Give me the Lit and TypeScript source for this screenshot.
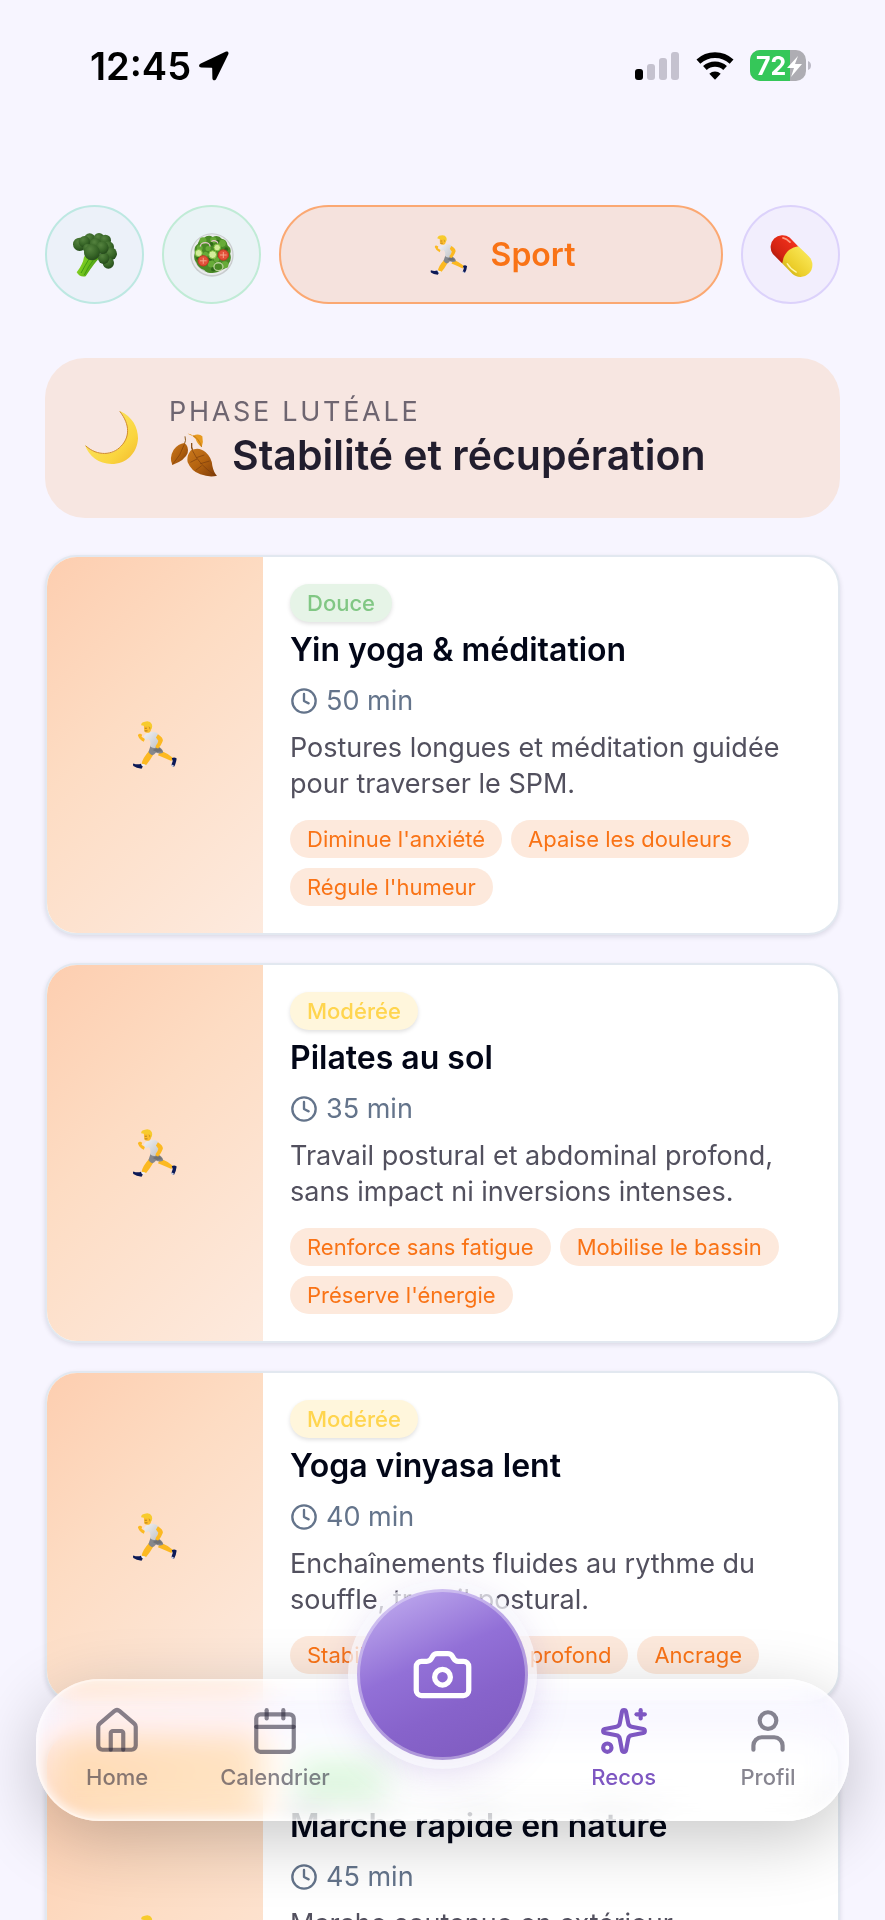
import { LitElement, html, css, svg } from "lit";
import { customElement, property, state } from "lit/decorators.js";
import { classMap } from "lit/directives/class-map.js";

type Level = "Douce" | "Modérée";

interface Workout {
  level: Level;
  title: string;
  minutes: number;
  text: string;
  tags: string[];
}

const workouts: Workout[] = [
  {
    level: "Douce",
    title: "Yin yoga & méditation",
    minutes: 50,
    text: "Postures longues et méditation guidée pour traverser le SPM.",
    tags: ["Diminue l'anxiété", "Apaise les douleurs", "Régule l'humeur"],
  },
  {
    level: "Modérée",
    title: "Pilates au sol",
    minutes: 35,
    text: "Travail postural et abdominal profond, sans impact ni inversions intenses.",
    tags: ["Renforce sans fatigue", "Mobilise le bassin", "Préserve l'énergie"],
  },
  {
    level: "Modérée",
    title: "Yoga vinyasa lent",
    minutes: 40,
    text: "Enchaînements fluides au rythme du souffle, travail postural.",
    tags: ["Stabilise", "Gainage profond", "Ancrage"],
  },
  {
    level: "Douce",
    title: "Marche rapide en nature",
    minutes: 45,
    text: "Marche soutenue en extérieur accompagnée de respirations profondes.",
    tags: ["Améliore l'endurance", "Apaise le mental", "Oxygène"],
  },
];

/* ---------- Illustrations ---------- */

const runner = html`<svg class="emoji" viewBox="0 0 134 146" aria-hidden="true">
  <defs>
    <linearGradient id="shirt" x1="0" y1="0" x2="1" y2="1">
      <stop offset="0" stop-color="#f1f1f3" /><stop offset="1" stop-color="#c3c5c9" />
    </linearGradient>
  </defs>
  <path d="M84 90 Q104 98 121 112 L117 122 Q96 112 76 104Z" fill="#fcb921" />
  <path d="M118 113 Q126 108 133 114 Q131 130 125 139 Q119 140 117 134 L121 122Z" fill="#0c1a57" />
  <path d="M117 132 L125 136 L122 140 Q117 140 117 134Z" fill="#cfd6ea" />
  <path d="M48 92 L62 102 Q52 120 40 134 L26 130 Q30 112 48 92Z" fill="#fcb921" />
  <path d="M1 129 Q14 134 24 130 L30 134 Q30 142 26 145 Q10 144 1 137 Q-1 132 1 129Z" fill="#0c1a57" />
  <path d="M24 129 L38 133 L34 138 L27 137Z" fill="#eef0f5" />
  <path d="M54 74 L78 78 Q92 86 92 96 Q82 102 70 96 Q64 104 58 104 Q50 100 47 94Z" fill="#85878c" />
  <path d="M60 88 L78 80 L90 92 L72 94Z" fill="#6f7176" />
  <path d="M33 46 Q44 32 60 33 Q74 34 77 42 Q80 64 68 82 Q58 84 52 76 Q56 62 47 55 L38 59Z" fill="url(#shirt)" />
  <path d="M76 40 Q92 50 91 60 Q86 74 77 84 Q68 82 69 76 Q76 68 77 60 L70 50Z" fill="#fcb921" />
  <path d="M15 44 Q16 37 23 39 L28 42 L26 48 L36 55 L33 63 Q20 58 15 44Z" fill="#fcb921" />
  <path d="M33 12 Q44 6 55 14 Q58 28 50 35 Q40 38 34 31Z" fill="#fdbd2c" />
  <path d="M37 22 h4 M37 30 h6" stroke="#8a5a12" stroke-width="2" stroke-linecap="round" />
  <path d="M25 13 Q24 4 36 2 Q52 -2 57 9 Q61 20 54 26 Q48 24 47 17 Q36 16 25 13Z" fill="#f7cb2d" />
  <path d="M48 18 q5 0 3 7" stroke="#b47a16" stroke-width="2" fill="none" />
</svg>`;

const broccoli = html`<svg class="emoji" viewBox="0 0 132 132" aria-hidden="true">
  <defs>
    <radialGradient id="floret" cx=".38" cy=".3" r=".75">
      <stop offset="0" stop-color="#55833f" /><stop offset=".6" stop-color="#376527" /><stop offset="1" stop-color="#23481a" />
    </radialGradient>
    <linearGradient id="stalk" x1="0" y1="0" x2="1" y2=".4">
      <stop offset="0" stop-color="#9be02c" /><stop offset=".5" stop-color="#6fc11c" /><stop offset="1" stop-color="#3f8e12" />
    </linearGradient>
  </defs>
  <path d="M42 60 L88 66 Q66 86 38 130 Q20 134 11 118 Q30 94 33 72Z" fill="url(#stalk)" />
  <path d="M48 78 Q36 98 24 120 M62 80 Q46 100 34 126" stroke="#3f9a12" stroke-width="3" fill="none" />
  <g fill="url(#floret)">
    <circle cx="50" cy="18" r="17" /><circle cx="78" cy="17" r="17" /><circle cx="97" cy="22" r="17" />
    <circle cx="106" cy="42" r="17" /><circle cx="20" cy="34" r="20" /><circle cx="34" cy="26" r="17" />
    <circle cx="113" cy="62" r="19" /><circle cx="106" cy="90" r="17" /><circle cx="92" cy="76" r="17" />
    <circle cx="68" cy="34" r="18" /><circle cx="88" cy="44" r="19" /><circle cx="44" cy="46" r="14" />
    <circle cx="57" cy="58" r="24" />
  </g>
</svg>`;

const salad = html`<svg class="emoji" viewBox="0 0 136 136" aria-hidden="true">
  <circle cx="68" cy="68" r="67" fill="#c9ccce" />
  <circle cx="68" cy="67" r="63" fill="#e9ebec" />
  <circle cx="68" cy="68" r="56" fill="#c4c8c6" />
  <path d="M42 16 Q56 4 70 12 Q88 4 98 18 Q114 20 116 38 Q130 48 124 64 Q130 82 120 94 Q112 112 96 114 Q84 124 70 124 Q52 124 44 114 Q24 108 20 92 Q8 78 16 62 Q10 44 24 34 Q28 18 42 16Z" fill="#4a8a26" />
  <g fill="#67ab38">
    <circle cx="40" cy="24" r="11" /><circle cx="72" cy="22" r="10" /><circle cx="100" cy="32" r="11" />
    <circle cx="30" cy="46" r="9" /><circle cx="56" cy="48" r="8" /><circle cx="66" cy="96" r="11" />
    <circle cx="108" cy="98" r="11" /><circle cx="48" cy="66" r="8" /><circle cx="82" cy="82" r="8" />
  </g>
  <g fill="#2f6a18">
    <circle cx="66" cy="34" r="6" /><circle cx="112" cy="50" r="6" /><circle cx="72" cy="112" r="7" />
    <circle cx="86" cy="26" r="5" /><circle cx="24" cy="78" r="5" /><circle cx="62" cy="80" r="6" />
  </g>
  <g fill="none" stroke="#e9c3cf" stroke-width="4">
    <path d="M32 42 A15 12 0 0 1 62 42" /><path d="M66 26 A12 9 0 0 1 86 32" />
  </g>
  <ellipse cx="88" cy="104" rx="14" ry="12" fill="none" stroke="#b9cf9a" stroke-width="4" />
  <g fill="#d3ec9a" stroke="#7fbf3c" stroke-width="3">
    <circle cx="27" cy="62" r="11" /><circle cx="84" cy="45" r="10" /><circle cx="70" cy="67" r="12" />
  </g>
  <g fill="#e2513a" stroke="#c23622" stroke-width="3">
    <circle cx="41" cy="86" r="16" /><circle cx="103" cy="68" r="16" />
  </g>
  <path d="M32 86 h18 M41 78 v16 M94 68 h18 M103 60 v16" stroke="#f5a58c" stroke-width="3" stroke-linecap="round" />
</svg>`;

const pill = html`<svg class="emoji" viewBox="0 0 126 126" aria-hidden="true">
  <defs>
    <linearGradient id="red" x1="0" y1="1" x2="1" y2="0">
      <stop offset="0" stop-color="#8e1207" /><stop offset=".35" stop-color="#d32412" /><stop offset=".8" stop-color="#f0301b" /><stop offset="1" stop-color="#c52514" />
    </linearGradient>
    <linearGradient id="yellow" x1="0" y1="1" x2="1" y2="0">
      <stop offset="0" stop-color="#b59a0a" /><stop offset=".35" stop-color="#ecce2a" /><stop offset=".75" stop-color="#f7e34f" /><stop offset="1" stop-color="#c9ae18" />
    </linearGradient>
  </defs>
  <path d="M84 39 L59 13 A34 34 0 0 0 11 60 L38 87 Z" fill="url(#red)" />
  <path d="M84 38 L114 67 A34 34 0 0 1 66 116 L38 87 Q42 46 84 38Z" fill="url(#yellow)" />
  <path d="M40 14 Q50 16 60 26" stroke="#ff9d84" stroke-width="5" fill="none" stroke-linecap="round" />
  <path d="M52 88 Q62 104 78 112" stroke="#fff6a8" stroke-width="4" fill="none" stroke-linecap="round" />
</svg>`;

const moon = html`<svg class="emoji" viewBox="0 0 160 160" aria-hidden="true">
  <defs>
    <linearGradient id="moon" x1="0" y1="0" x2="1" y2="1">
      <stop offset=".3" stop-color="#fbe25a" /><stop offset=".7" stop-color="#fad53f" /><stop offset="1" stop-color="#f2b82c" />
    </linearGradient>
  </defs>
  <path d="M105 0 C143 16 160 50 160 82 C158 128 124 160 80 160 C42 160 12 138 0 103 C38 140 84 134 108 108 C136 80 136 40 105 0Z" fill="url(#moon)" />
  <path d="M105 1 C137 42 135 80 108 107 C84 133 38 138 2 105" fill="none" stroke="#d08a2a" stroke-width="3" />
</svg>`;

const leaves = html`<svg class="emoji" viewBox="0 0 138 132" aria-hidden="true">
  <defs>
    <linearGradient id="leaf" x1="0" y1="0" x2="1" y2="1">
      <stop offset="0" stop-color="#c9781d" /><stop offset=".5" stop-color="#b3620f" /><stop offset="1" stop-color="#7d3a08" />
    </linearGradient>
  </defs>
  <path d="M42 10 Q46 22 40 34" stroke="#8c5a1e" stroke-width="3" fill="none" />
  <path d="M40 30 Q54 40 50 60 Q42 82 4 96 Q-6 74 8 50 Q22 32 40 30Z" fill="url(#leaf)" />
  <path d="M40 34 Q30 66 5 94" stroke="#7a3d0c" stroke-width="2" fill="none" />
  <path d="M62 30 Q60 44 66 54" stroke="#8c4f14" stroke-width="4" fill="none" />
  <path d="M60 52 Q84 40 104 58 Q122 74 124 98 Q128 118 138 128 Q116 134 88 124 Q62 116 50 88 Q46 68 60 52Z" fill="url(#leaf)" />
  <path d="M64 52 Q84 96 134 128 M76 74 L100 66 M88 92 L116 84 M78 78 L58 88 M92 98 L74 112" stroke="#7a3d0c" stroke-width="2" fill="none" />
  <path d="M50 2 Q58 1 66 8 Q84 0 94 10 Q98 26 92 43 Q78 32 74 18 Q64 6 50 2Z" fill="#e79a1f" />
  <path d="M66 8 Q84 16 92 42" stroke="#b36a10" stroke-width="2" fill="none" />
</svg>`;

/* ---------- Line icons ---------- */

const icons = {
  clock: svg`<circle cx="12" cy="12" r="10"/><path d="M12 6v6l4 2"/>`,
  home: svg`<path d="M15 21v-8a1 1 0 0 0-1-1h-4a1 1 0 0 0-1 1v8"/><path d="M3 10a2 2 0 0 1 .709-1.528l7-6a2 2 0 0 1 2.582 0l7 6A2 2 0 0 1 21 10v9a2 2 0 0 1-2 2H5a2 2 0 0 1-2-2z"/>`,
  calendar: svg`<path d="M8 2v4"/><path d="M16 2v4"/><rect width="18" height="18" x="3" y="4" rx="2"/><path d="M3 10h18"/>`,
  sparkles: svg`<path d="M11.017 2.814a1 1 0 0 1 1.966 0l1.051 5.558a2 2 0 0 0 1.594 1.594l5.558 1.051a1 1 0 0 1 0 1.966l-5.558 1.051a2 2 0 0 0-1.594 1.594l-1.051 5.558a1 1 0 0 1-1.966 0l-1.051-5.558a2 2 0 0 0-1.594-1.594l-5.558-1.051a1 1 0 0 1 0-1.966l5.558-1.051a2 2 0 0 0 1.594-1.594z"/><path d="M20 2v4"/><path d="M22 4h-4"/><circle cx="4" cy="20" r="2"/>`,
  user: svg`<path d="M19 21v-2a4 4 0 0 0-4-4H9a4 4 0 0 0-4 4v2"/><circle cx="12" cy="7" r="4"/>`,
  camera: svg`<path d="M13.997 4a2 2 0 0 1 1.76 1.05l.486.9A2 2 0 0 0 18.003 7H20a2 2 0 0 1 2 2v9a2 2 0 0 1-2 2H4a2 2 0 0 1-2-2V9a2 2 0 0 1 2-2h1.997a2 2 0 0 0 1.759-1.048l.489-.904A2 2 0 0 1 10.004 4z"/><circle cx="12" cy="13" r="3"/>`,
};

const icon = (name: keyof typeof icons) =>
  html`<svg class="icon" viewBox="0 0 24 24" aria-hidden="true">${icons[name]}</svg>`;

const shared = css`
  * {
    box-sizing: border-box;
  }
  svg {
    display: block;
    flex: none;
  }
  .icon {
    fill: none;
    stroke: currentColor;
    stroke-width: 2;
    stroke-linecap: round;
    stroke-linejoin: round;
  }
`;

@customElement("status-bar")
export class StatusBar extends LitElement {
  static styles = [
    shared,
    css`
      :host {
        display: flex;
        align-items: center;
        justify-content: space-between;
        height: 32px;
        padding: 0 74px 0 90px;
        color: #000;
      }
      .side {
        display: flex;
        align-items: center;
      }
      .time {
        font-size: 38px;
        line-height: 32px;
        font-weight: 600;
        margin-right: 8px;
      }
      .arrow {
        width: 30px;
        height: 30px;
      }
      .signal {
        width: 44px;
        height: 28px;
        margin-right: 17px;
      }
      .wifi {
        width: 38px;
        height: 28px;
        margin-right: 16px;
      }
      .battery {
        width: 61px;
        height: 32px;
      }
      .charge {
        font: 700 25px Inter, sans-serif;
      }
    `,
  ];

  render() {
    return html`
      <div class="side">
        <span class="time">12:45</span>
        <svg class="arrow" viewBox="0 0 30 30" aria-hidden="true">
          <path d="M26.5 .8 L1.8 12.6 C-.8 14 -.2 16.4 2.4 16.5 L12.6 16.7 Q13.2 16.7 13.2 17.4 L13.4 27.2 C13.5 29.8 16.2 30 17.3 27.8 L29.2 3.6 C30.2 1.2 28.6 -.2 26.5 .8Z" />
        </svg>
      </div>
      <div class="side">
        <svg class="signal" viewBox="0 0 44 28" aria-hidden="true">
          <rect y="17" width="8" height="11" rx="3" />
          <g fill="#c5c2cf">
            <rect x="12" y="12" width="8" height="16" rx="3" />
            <rect x="24" y="6" width="8" height="22" rx="3" />
            <rect x="36" width="8" height="28" rx="3" />
          </g>
        </svg>
        <svg class="wifi" viewBox="0 0 38 28" aria-hidden="true">
          <g fill="none" stroke="#000">
            <path d="M2.4 9.6 A24.5 24.5 0 0 1 35.6 9.6" stroke-width="5.6" />
            <path d="M8.9 16 A15 15 0 0 1 29.1 16" stroke-width="5.4" />
          </g>
          <path d="M19 27.8 L13.3 21.8 A8.3 8.3 0 0 1 24.7 21.8Z" />
        </svg>
        <svg class="battery" viewBox="0 0 61 32" role="img" aria-label="72 %">
          <defs>
            <clipPath id="cell"><rect width="56" height="31" rx="10" /></clipPath>
          </defs>
          <g clip-path="url(#cell)">
            <rect width="56" height="31" fill="#aeadb3" />
            <rect width="40" height="31" fill="#35c759" />
          </g>
          <path d="M58 11 Q61 12 61 15.500 Q61 19 58 20Z" fill="#bcbac6" />
          <text class="charge" x="6" y="25" fill="#fff">72</text>
          <path d="M48 6 L37 18 H44 L41 27 L52 14 H45Z" fill="#fff" />
        </svg>
      </div>
    `;
  }
}

@customElement("workout-card")
export class WorkoutCard extends LitElement {
  @property({ attribute: false }) workout!: Workout;

  static styles = [
    shared,
    css`
      :host {
        display: block;
      }
      .card {
        display: grid;
        grid-template-columns: 216px 1fr;
        overflow: hidden;
        border: 2px solid #e2e8f0;
        border-radius: 32px;
        background: #fff;
        box-shadow: 0 2px 5px rgba(15, 15, 40, 0.12);
      }
      .visual {
        display: grid;
        place-items: center;
        background: linear-gradient(135deg, #fdceb0, #fddcc3 40%, #fdeade);
      }
      .emoji {
        width: 44px;
        height: 48px;
      }
      .content {
        padding: 27px;
        min-width: 0;
      }
      .badge,
      .tag {
        display: inline-block;
        padding: 0 17px;
        border-radius: 19px;
        font-size: 22px;
        line-height: 38px;
      }
      .badge {
        display: block;
        width: fit-content;
        box-shadow: 0 2px 4px rgba(0, 0, 0, 0.12);
        font-weight: 500;
      }
      .soft {
        color: #81c784;
        background: #e6f4e7;
      }
      .medium {
        color: #ffd54f;
        background: #fff6dc;
      }
      h2 {
        margin: 6px 0 11px;
        color: #020617;
        font-size: 32px;
        line-height: 44px;
        font-weight: 600;
      }
      .meta {
        display: flex;
        align-items: center;
        gap: 8px;
        color: #64748b;
        font-size: 27px;
        line-height: 36px;
      }
      .icon {
        width: 28px;
        height: 28px;
      }
      p {
        margin: 11px 0 18px;
        color: #52505e;
        font-size: 27px;
        line-height: 36px;
      }
      .tags {
        display: flex;
        flex-wrap: wrap;
        gap: 10px 9px;
        margin: 0;
        padding: 0;
        list-style: none;
      }
      .tag {
        color: #f97316;
        background: #fde9dc;
      }
    `,
  ];

  render() {
    const w = this.workout;
    const soft = w.level === "Douce";
    return html`
      <article class="card">
        <div class="visual">${runner}</div>
        <div class="content">
          <span class=${classMap({ badge: true, soft, medium: !soft })}>${w.level}</span>
          <h2>${w.title}</h2>
          <div class="meta">${icon("clock")}<span>${w.minutes} min</span></div>
          <p>${w.text}</p>
          <ul class="tags">
            ${w.tags.map((t) => html`<li class="tag">${t}</li>`)}
          </ul>
        </div>
      </article>
    `;
  }
}

@customElement("bottom-nav")
export class BottomNav extends LitElement {
  static styles = [
    shared,
    css`
      :host {
        display: block;
      }
      .bar {
        position: relative;
        display: flex;
        justify-content: space-between;
        padding: 27px 50px 26px;
        border-radius: 63px;
        box-shadow: 0 18px 68px rgba(0, 0, 0, 0.22);
      }
      .glass {
        position: absolute;
        inset: 0;
        border-radius: inherit;
        background: rgba(255, 255, 255, 0.32);
        -webkit-backdrop-filter: blur(17px) saturate(190%);
        backdrop-filter: blur(17px) saturate(190%);
        box-shadow:
          inset 0 0 0 2px rgba(255, 255, 255, 0.25),
          inset 0 0 10px 2px rgba(255, 255, 255, 0.5),
          inset 0 -6px 10px rgba(255, 255, 255, 0.4);
      }
      .group {
        position: relative;
        display: flex;
        gap: 72px;
      }
      .group.end {
        gap: 81px;
      }
      .link {
        display: flex;
        flex-direction: column;
        align-items: center;
        gap: 3px;
        min-width: 62px;
        color: rgba(37, 32, 52, 0.55);
        font-size: 22px;
        line-height: 36px;
        font-weight: 500;
        text-decoration: none;
      }
      .link.active {
        color: #7e57c2;
      }
      .link .icon {
        width: 50px;
        height: 50px;
      }
      .camera {
        position: absolute;
        top: -90px;
        left: 0;
        right: 0;
        display: grid;
        place-items: center;
        width: 171px;
        height: 171px;
        margin: 0 auto;
        padding: 0;
        border: 3px solid rgba(255, 255, 255, 0.35);
        border-radius: 50%;
        color: #fff;
        background: linear-gradient(155deg, #bda8ed 8%, #9270d7 42%, #8763cb 65%, #7e5abd) border-box;
        box-shadow:
          0 0 0 9px rgba(250, 249, 254, 0.72),
          0 9px 40px rgba(126, 87, 194, 0.28);
      }
      .camera .icon {
        width: 63px;
        height: 63px;
      }
    `,
  ];

  render() {
    return html`
      <nav class="bar" aria-label="Navigation principale">
        <div class="glass"></div>
        <div class="group">
          <a class="link" href="#home">${icon("home")}Home</a>
          <a class="link" href="#calendrier">${icon("calendar")}Calendrier</a>
        </div>
        <div class="group end">
          <a class="link active" href="#recos" aria-current="page">${icon("sparkles")}Recos</a>
          <a class="link" href="#profil">${icon("user")}Profil</a>
        </div>
        <button class="camera" type="button" aria-label="Appareil photo">${icon("camera")}</button>
      </nav>
    `;
  }
}

const categories = [
  { id: "legumes", label: "Légumes", art: broccoli },
  { id: "repas", label: "Repas", art: salad },
  { id: "sport", label: "Sport", art: runner },
  { id: "complements", label: "Compléments", art: pill },
];

@customElement("app-root")
export class AppRoot extends LitElement {
  @state() private selected = "sport";

  static styles = [
    shared,
    css`
      :host {
        position: relative;
        display: block;
        height: 100vh;
        overflow: hidden;
        background: #f7f5ff;
        font-family: Inter, "Liberation Sans", sans-serif;
      }
      .page {
        height: 100%;
        overflow-y: auto;
        scrollbar-width: none;
        padding: 50px 0 270px;
      }
      .tabs {
        display: flex;
        gap: 18px;
        padding: 123px 45px 0;
      }
      .tab {
        display: flex;
        align-items: center;
        justify-content: center;
        gap: 20px;
        width: 99px;
        height: 99px;
        padding: 0;
        border: 2px solid;
        border-radius: 50px;
        font: inherit;
      }
      .tab .emoji {
        width: 44px;
        height: 44px;
      }
      .tab.legumes {
        background: #ecf1f9;
        border-color: #bde8e2;
      }
      .tab.repas {
        background: #eaf3f6;
        border-color: #c0ebd6;
      }
      .tab.sport {
        color: #f97316;
        background: #f5e2dd;
        border-color: #fba872;
      }
      .tab.sport .emoji {
        height: 40px;
      }
      .tab.complements {
        background: #f2eefd;
        border-color: #dcd2fb;
      }
      .tab.selected {
        flex: 1;
        font-size: 32px;
        font-weight: 600;
      }
      .phase {
        display: flex;
        align-items: center;
        gap: 31px;
        margin: 54px 45px 37px;
        padding: 36px 40px 38px;
        border-radius: 40px;
        background: #f7e6e1;
      }
      .phase .emoji {
        width: 53px;
        height: 53px;
      }
      .eyebrow {
        margin: 0;
        color: #6e6570;
        font-size: 27px;
        line-height: 36px;
        letter-spacing: 0.1em;
        text-transform: uppercase;
      }
      h1 {
        display: flex;
        align-items: center;
        gap: 13px;
        margin: 0;
        color: #221e2e;
        font-size: 41px;
        line-height: 50px;
        font-weight: 600;
      }
      .phase h1 .emoji {
        width: 50px;
        height: 44px;
      }
      .list {
        display: flex;
        flex-direction: column;
        gap: 28px;
        padding: 0 45px;
      }
      .dock {
        position: absolute;
        left: 36px;
        right: 36px;
        bottom: 99px;
      }
    `,
  ];

  render() {
    return html`
      <main class="page">
        <status-bar></status-bar>
        <div class="tabs">
          ${categories.map((c) => {
            const selected = c.id === this.selected;
            return html`<button
              type="button"
              class=${classMap({ tab: true, [c.id]: true, selected })}
              aria-label=${c.label}
              aria-pressed=${selected ? "true" : "false"}
              @click=${() => (this.selected = c.id)}
            >
              ${c.art}${selected ? html`<span>${c.label}</span>` : ""}
            </button>`;
          })}
        </div>
        <header class="phase">
          ${moon}
          <div>
            <p class="eyebrow">Phase lutéale</p>
            <h1>${leaves}<span>Stabilité et récupération</span></h1>
          </div>
        </header>
        <section class="list">
          ${workouts.map((w) => html`<workout-card .workout=${w}></workout-card>`)}
        </section>
      </main>
      <bottom-nav class="dock"></bottom-nav>
    `;
  }
}
